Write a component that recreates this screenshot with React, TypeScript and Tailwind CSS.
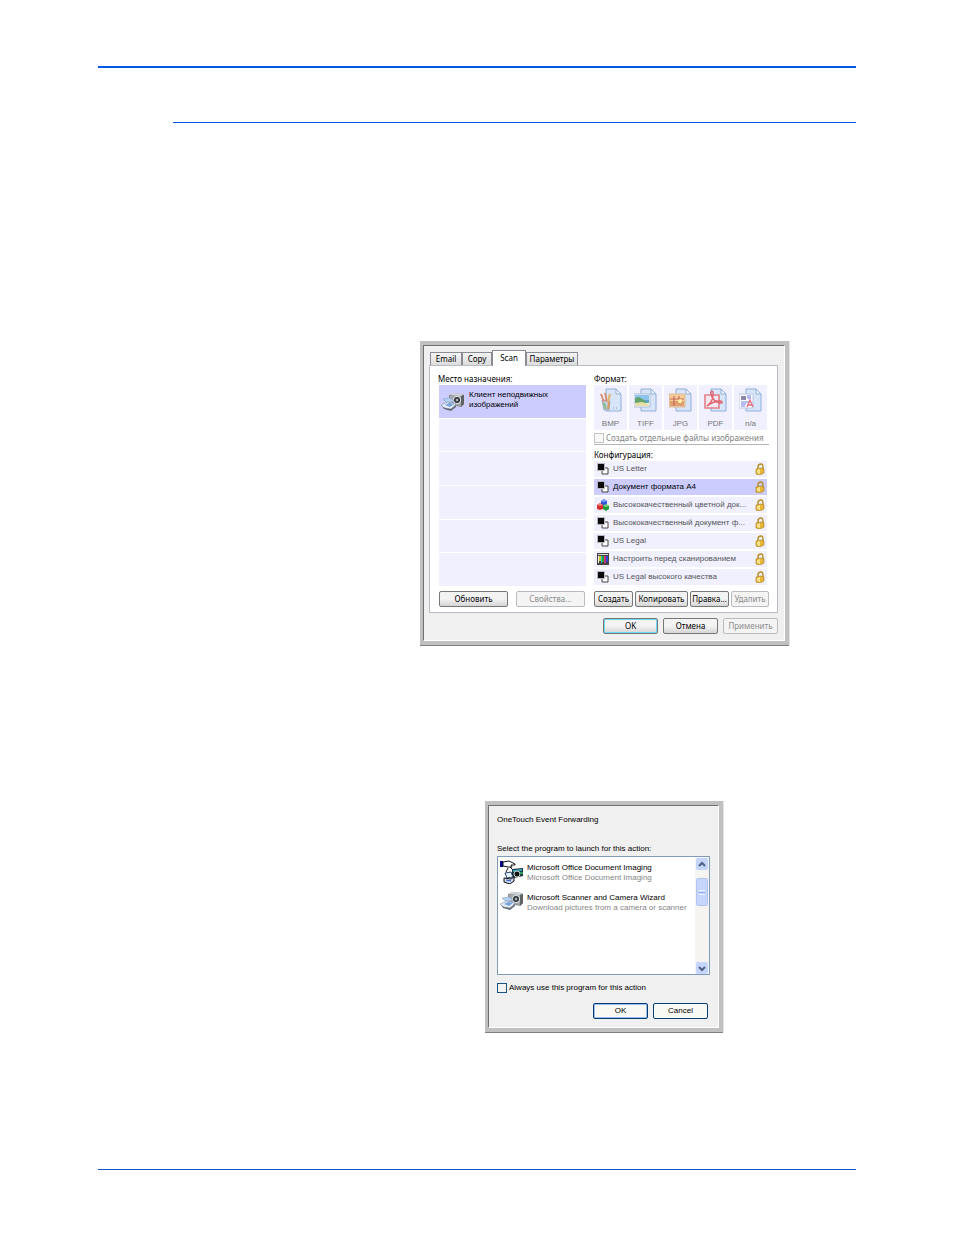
import { ReactNode } from "react";

const App = () => {
  return (
    <main className="bg-white px-[98px] pt-[66px] pb-[65px] text-[8px] leading-[10px] font-['Liberation_Sans',sans-serif] text-black">
      <hr className="border-0 h-[2px] bg-[#005ae6]" />
      <hr className="border-0 mt-[54px] ml-[75px] h-px bg-[#005ae6]" />
      <div className="mt-[218px] ml-[322px]">
        <ScanDialog />
      </div>
      <div className="mt-[156px] ml-[387px]">
        <EventDialog />
      </div>
      <hr className="border-0 mt-[137px] h-px bg-[#1155cc]" />
    </main>
  );
};

const Frame = ({ children, className }: { children: ReactNode; className: string }) => (
  <section
    className={`${className} border-t-4 border-l-[3px] border-r-4 border-b-4 border-[#c0c0c0] shadow-[0_1px_0_#808080,1px_0_0_#e4e4e4]`}
  >
    <div className="h-full border border-t-[#707070] border-l-[#707070] border-r-white border-b-white bg-[#f0f0f0]">
      {children}
    </div>
  </section>
);

/* Icons */

const ScannerIcon = () => (
  <svg viewBox="0 0 24 20" className="w-6 h-5 shrink-0">
    <path d="m8 4 4-2 10 1 1 2v8l-3 3-9-2-3-4z" fill="#8b8e92" />
    <path d="m8 4 4-2 10 1-2 2z" fill="#d3d6da" />
    <path d="m20 5 3-1v9l-3 3z" fill="#5f6265" />
    <path d="M9 5h11v10l-11-3z" fill="#a3a6aa" />
    <circle cx="16" cy="9" r="4" fill="#d9dcdf" />
    <circle cx="16" cy="9" r="3" fill="#33373b" />
    <circle cx="16" cy="9" r="1.3" fill="#a9b4c0" />
    <path d="m2 8 7-1 4 3-7 2z" fill="#b4d0f0" stroke="#7f9cc0" strokeWidth=".5" />
    <path d="m0 14 7-3 8 2-5 5-7-1z" fill="#e4edf7" stroke="#8494a8" strokeWidth=".6" />
    <path d="m4 14 4-2 5 1-4 3z" fill="#78a4dc" />
    <path d="m1 15 3 2 6 1 5-4v2l-5 4-7-2z" fill="#646b74" />
  </svg>
);

const ImagingIcon = () => (
  <svg viewBox="0 0 24 24" className="w-6 h-6 shrink-0">
    <path d="M0 1h3v6H0z" fill="#00008b" />
    <path d="m3 2 6-1 6 3v1h-4l1 2H8L3 6z" fill="#fff" stroke="#111" />
    <path d="m10 7 3 3M8 8l-2 4" stroke="#111" />
    <path d="m12 9 11-1v8l-9 2-2-3z" fill="#16323a" />
    <path d="m13 10 9-1v2l-9 1z" fill="#35a8c0" />
    <circle cx="17" cy="14" r="3" fill="#111" stroke="#c8d0d0" />
    <path d="M20 12h3v2h-3z" fill="#2aa060" />
    <path d="m5 13 6-1 2 5-6 1z" fill="#e4f4ff" stroke="#2a3c60" />
    <path d="m4 18 7 1 3-2v4l-4 3-6-2z" fill="#c8d8f0" stroke="#111" />
    <path d="m6 20 5 1" stroke="#3050c0" />
  </svg>
);

const BlackWhiteIcon = () => (
  <svg viewBox="0 0 12 12" className="w-3 h-3 shrink-0">
    <path d="M5 5h6v6H5z" fill="#fff" stroke="#444" />
    <path d="M0 0h8v8H0z" fill="#b8b8c0" />
    <path d="M1 1h6v6H1z" fill="#0a0a0a" />
  </svg>
);

const ColorIcon = () => (
  <svg viewBox="0 0 12 12" className="w-3 h-3 shrink-0">
    <path d="m4 2 3-2 3 2v4L7 7 4 6z" fill="#3157d8" />
    <path d="m4 2 3-2 3 2-3 1z" fill="#86a5f5" />
    <path d="m0 6 3-2 3 2v4l-3 1-3-1z" fill="#d52c2c" />
    <path d="m0 6 3-2 3 2-3 1z" fill="#f08a80" />
    <path d="m6 7 3-2 3 2v3l-3 2-3-2z" fill="#259a38" />
    <path d="m6 7 3-2 3 2-3 1z" fill="#7bd280" />
  </svg>
);

const BarsIcon = () => (
  <svg viewBox="0 0 12 12" className="w-3 h-3 shrink-0">
    <path d="M0 0h12v12H0z" fill="#444" />
    <path d="M1 1h10v1H1z" fill="#ddd" />
    <path d="M1 3h1v7H1z" fill="#eee" />
    <path d="M2 3h2v5H2z" fill="#d8c820" />
    <path d="M4 3h1v7H4z" fill="#20b8d0" />
    <path d="M5 3h2v6H5z" fill="#28a838" />
    <path d="M7 3h2v7H7z" fill="#d03078" />
    <path d="M9 3h2v6H9z" fill="#3048d0" />
  </svg>
);

const LockIcon = () => (
  <svg viewBox="0 0 10 12" className="w-[10px] h-3 shrink-0">
    <path d="M3 6V4q0-3 3-3 2 0 2 3v2" fill="none" stroke="#b78c22" strokeWidth="1.4" />
    <path d="m1 6 5-1 3 1v4l-4 2-4-1z" fill="#e6b638" stroke="#a87a18" strokeWidth=".6" />
    <path d="m2 7 3-1v5l-3-1z" fill="#f9e28c" />
  </svg>
);

const FileIcon = ({ children }: { children: ReactNode }) => (
  <svg viewBox="0 0 24 24" className="w-6 h-6">
    <path d="M7 1h10l5 5v17H7z" fill="#d8e5f9" stroke="#91aed9" />
    <path d="M17 1v5h5z" fill="#f4f8ff" stroke="#91aed9" />
    {children}
  </svg>
);

const formats = [
  {
    name: "BMP",
    art: (
      <>
        <path d="m3 12 8 1-1 9H5z" fill="#c3d3e6" stroke="#98a9c0" />
        <path d="m5 14-3-8M8 14 6 5" stroke="#d99078" strokeWidth="2" />
        <path d="m9 14 2-8" stroke="#e3b36a" strokeWidth="2" />
        <path d="m5 15 2 6" stroke="#83ba8c" strokeWidth="2" />
        <path d="m10 14-1 7" stroke="#e09a60" strokeWidth="2" />
        <path d="M14 20h1m2 0h1" stroke="#8aa0c0" />
      </>
    ),
  },
  {
    name: "TIFF",
    art: (
      <>
        <path d="M0 6h16v13H0z" fill="#fff" stroke="#a9bdd6" />
        <path d="M1 7h14v5H1z" fill="#8ec5ef" />
        <path d="M1 12h14v3H1z" fill="#5ea4cf" />
        <path d="m1 10 4-1 5 3 3 3H1z" fill="#62a36e" />
        <path d="m1 15 7-1 7 2v2H1z" fill="#e8e0a8" />
      </>
    ),
  },
  {
    name: "JPG",
    art: (
      <>
        <path d="M0 6h16v13H0z" fill="#f7cd98" stroke="#d9b89a" />
        <path d="M1 13h14v5H1z" fill="#dfa070" />
        <path d="M1 11h14M5 8v10M10 8v4" stroke="#c8685a" strokeWidth="1.2" />
        <circle cx="11" cy="13" r="2" fill="#fff0a8" />
      </>
    ),
  },
  {
    name: "PDF",
    art: (
      <>
        <path d="M1 7h14v13H1z" fill="#f4e8f0" stroke="#e08088" strokeWidth="1.6" />
        <path
          d="M3 18c4-2 7-9 6-14-1-2-3 0-2 2 1 5 5 9 10 9 2 0 1-2-1-2-5 0-9 2-13 5z"
          fill="none"
          stroke="#df6670"
          strokeWidth="1.4"
        />
      </>
    ),
  },
  {
    name: "n/a",
    art: (
      <>
        <path d="M0 6h14v14H0z" fill="#fff" stroke="#b8c4e0" />
        <path d="M2 8h5v4H2z" fill="#8c86a8" />
        <path d="M8 8h4M8 10h4M2 14h9M2 16h5M2 18h4" stroke="#6c76e8" />
        <path d="m8 19 3-7 3 7M9 17h4" fill="none" stroke="#df7088" strokeWidth="1.4" />
      </>
    ),
  },
];

const configs = [
  { name: "US Letter", icon: <BlackWhiteIcon /> },
  { name: "Документ формата A4", icon: <BlackWhiteIcon />, selected: true },
  { name: "Высококачественный цветной док...", icon: <ColorIcon /> },
  { name: "Высококачественный документ ф...", icon: <BlackWhiteIcon /> },
  { name: "US Legal", icon: <BlackWhiteIcon /> },
  { name: "Настроить перед сканированием", icon: <BarsIcon /> },
  { name: "US Legal высокого качества", icon: <BlackWhiteIcon /> },
];

const Button = ({
  children,
  className,
  disabled,
}: {
  children: ReactNode;
  className: string;
  disabled?: boolean;
}) => (
  <button
    disabled={disabled}
    className={`${className} h-4 shrink-0 whitespace-nowrap rounded-[2px] border border-[#777] bg-linear-to-b from-[#f3f3f3] from-50% to-[#d5d5d5] leading-3 text-center disabled:border-[#b8bcc0] disabled:bg-none disabled:bg-[#f4f4f4] disabled:text-[#8c8c8c]`}
  >
    {children}
  </button>
);

const ScanDialog = () => {
  return (
    <Frame className="w-[369px] h-[304px]">
      <div className="pl-[5px] pr-[6px] pt-1 font-['Noto_Sans',sans-serif]">
        <div role="tablist" className="flex items-end pl-px">
          <Tab className="w-8">Email</Tab>
          <Tab className="w-[30px]">Copy</Tab>
          <button
            role="tab"
            aria-selected="true"
            className="relative -mb-px h-4 w-[34px] border border-b-0 border-[#898c95] bg-white pb-px"
          >
            Scan
          </button>
          <Tab className="w-[52px]">Параметры</Tab>
        </div>
        <div className="flex h-[248px] border border-[#b9bcc4] bg-white pl-2 pt-[6px]">
          <div className="mr-2 w-[148px]">
            <h2 className="h-[13px] leading-[13px]">Место назначения:</h2>
            <ul className="ml-px grid h-[201px] w-[147px] grid-rows-6 gap-px">
              <li className="flex gap-1 bg-[#ccccff] pl-[2px] pt-[5px] font-['Liberation_Sans',sans-serif]">
                <span className="pt-px">
                  <ScannerIcon />
                </span>
                <span>
                  Клиент неподвижных
                  <br />
                  изображений
                </span>
              </li>
              <li className="bg-[#f0f0ff]" />
              <li className="bg-[#f0f0ff]" />
              <li className="bg-[#f0f0ff]" />
              <li className="bg-[#f0f0ff]" />
              <li className="bg-[#f0f0ff]" />
            </ul>
            <div className="ml-px mt-[5px] flex gap-2">
              <Button className="w-[69px]">Обновить</Button>
              <Button className="w-[69px]" disabled>
                Свойства...
              </Button>
            </div>
          </div>
          <div className="w-[175px]">
            <h2 className="h-[13px] leading-[13px]">Формат:</h2>
            <div className="grid h-[45px] w-[173px] grid-cols-5 gap-[2px] font-['Liberation_Sans',sans-serif]">
              {formats.map((format) => (
                <div key={format.name} className="flex flex-col items-center bg-[#f0f0ff] pt-[3px] text-[#777]">
                  <FileIcon>{format.art}</FileIcon>
                  <span className="mt-[7px]">{format.name}</span>
                </div>
              ))}
            </div>
            <label className="mt-[2px] flex h-3 items-center gap-[2px] whitespace-nowrap text-[#838383]">
              <input
                type="checkbox"
                disabled
                className="h-[10px] w-[10px] shrink-0 appearance-none border border-[#c4c4c4] bg-[#f8f8f8]"
              />
              Создать отдельные файлы изображения
            </label>
            <hr className="border-0 h-px bg-[#b4b4b4]" />
            <h2 className="mt-[3px] h-[13px] leading-[13px]">Конфигурация:</h2>
            <ul className="flex w-[173px] flex-col gap-[2px] font-['Liberation_Sans',sans-serif]">
              {configs.map((config) => (
                <li
                  key={config.name}
                  className={`flex h-4 items-center whitespace-nowrap pl-[3px] pr-[2px] ${
                    config.selected ? "bg-[#ccccff] text-black" : "bg-[#f0f0ff] text-[#555]"
                  }`}
                >
                  {config.icon}
                  <span className="ml-1 flex-1">{config.name}</span>
                  <LockIcon />
                </li>
              ))}
            </ul>
            <div className="mt-[6px] flex gap-[2px]">
              <Button className="w-[39px]">Создать</Button>
              <Button className="w-[53px]">Копировать</Button>
              <Button className="w-[39px]">Правка...</Button>
              <Button className="w-[38px]" disabled>
                Удалить
              </Button>
            </div>
          </div>
        </div>
        <div className="mt-[5px] flex justify-end gap-[5px]">
          <Button className="w-[55px] border-[#3c8fb8] shadow-[inset_0_0_0_1px_#6fd8f8]">OK</Button>
          <Button className="w-[55px]">Отмена</Button>
          <Button className="w-[55px]" disabled>
            Применить
          </Button>
        </div>
      </div>
    </Frame>
  );
};

const Tab = ({ children, className }: { children: ReactNode; className: string }) => (
  <button
    role="tab"
    aria-selected="false"
    className={`${className} h-[13px] whitespace-nowrap border border-b-0 border-[#898c95] bg-linear-to-b from-[#f3f3f3] to-[#dddddd] text-center`}
  >
    {children}
  </button>
);

const programs = [
  {
    name: "Microsoft Office Document Imaging",
    about: "Microsoft Office Document Imaging",
    icon: <ImagingIcon />,
  },
  {
    name: "Microsoft Scanner and Camera Wizard",
    about: "Download pictures from a camera or scanner",
    icon: <ScannerIcon />,
  },
];

const EventDialog = () => {
  return (
    <Frame className="w-[238px] h-[231px]">
      <div className="pl-[8px] pr-[8px] pt-[9px]">
        <h1>OneTouch Event Forwarding</h1>
        <p className="mt-[19px]">Select the program to launch for this action:</p>
        <div className="mt-[2px] flex h-[119px] border border-[#7f9db9] bg-white">
          <ul className="min-w-0 flex-1 pl-[2px] pt-[3px]">
            {programs.map((program) => (
              <li key={program.name} className="flex h-[30px] gap-[3px] whitespace-nowrap">
                <span className="w-6">{program.icon}</span>
                <span className="pt-[3px]">
                  {program.name}
                  <br />
                  <span className="text-[#858585]">{program.about}</span>
                </span>
              </li>
            ))}
          </ul>
          <div className="flex w-[14px] shrink-0 flex-col items-center bg-[#f5f4f0] pt-px pr-px">
            <button aria-label="Scroll up" className="flex h-3 w-3 items-center justify-center rounded-[2px] bg-[#c5d5fb]">
              <Chevron d="m1 5 3-3 3 3" />
            </button>
            <div className="mt-2 flex h-7 w-3 flex-col items-center justify-center gap-px rounded-[2px] border border-[#b0c4f4] bg-[#c5d5fb]">
              <i className="h-px w-[6px] bg-[#eef4fe]" />
              <i className="h-px w-[6px] bg-[#8cb0f8]" />
              <i className="h-px w-[6px] bg-[#eef4fe]" />
            </div>
            <button
              aria-label="Scroll down"
              className="mt-auto flex h-3 w-3 items-center justify-center rounded-[2px] bg-[#c5d5fb]"
            >
              <Chevron d="m1 2 3 3 3-3" />
            </button>
          </div>
        </div>
        <label className="mt-2 flex items-center gap-[2px]">
          <input type="checkbox" className="h-[10px] w-[10px] appearance-none border border-[#1c5180] bg-[#f3f3ef]" />
          Always use this program for this action
        </label>
        <div className="mt-[10px] flex justify-end gap-[5px] pr-[2px]">
          <XpButton className="shadow-[inset_0_0_0_1px_#9ebcf0]">OK</XpButton>
          <XpButton className="">Cancel</XpButton>
        </div>
      </div>
    </Frame>
  );
};

const Chevron = ({ d }: { d: string }) => (
  <svg viewBox="0 0 8 7" className="w-2 h-[7px]">
    <path d={d} fill="none" stroke="#4d6185" strokeWidth="2" />
  </svg>
);

const XpButton = ({ children, className }: { children: ReactNode; className: string }) => (
  <button
    className={`${className} h-4 w-[55px] rounded-[2px] border border-[#003c74] bg-[#f8f8f5] leading-3 text-center`}
  >
    {children}
  </button>
);

export default App;
